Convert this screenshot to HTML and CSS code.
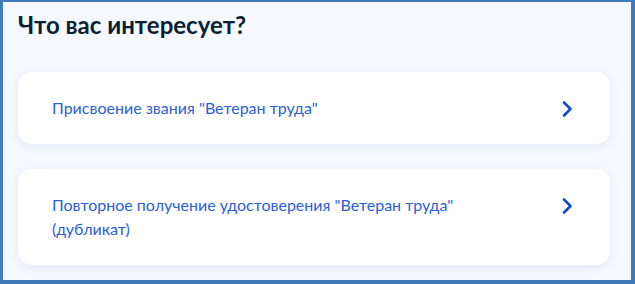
FILE: index.html
```html
<!DOCTYPE html>
<html lang="ru">
  <head>
    <meta charset="UTF-8" />
    <meta name="viewport" content="width=device-width, initial-scale=1.0" />
    <title>Что вас интересует?</title>
    <link rel="stylesheet" href="styles.css">
  </head>
  <body>
    <div class="frame">
      <h2 class="question">Что вас интересует?</h2>

      <div class="options">
        <a href="#" class="option">
          <span class="option-text">Присвоение звания "Ветеран труда"</span>
          <svg class="chevron" width="12" height="18" viewBox="0 0 12 18">
            <path d="M3 2.5 L9.5 9 L3 15.5" fill="none" stroke="#0d4cd3" stroke-width="2.6" stroke-linecap="round" stroke-linejoin="round"/>
          </svg>
        </a>

        <a href="#" class="option">
          <span class="option-text">Повторное получение удостоверения "Ветеран труда" (дубликат)</span>
          <svg class="chevron" width="12" height="18" viewBox="0 0 12 18">
            <path d="M3 2.5 L9.5 9 L3 15.5" fill="none" stroke="#0d4cd3" stroke-width="2.6" stroke-linecap="round" stroke-linejoin="round"/>
          </svg>
        </a>
      </div>
    </div>
  </body>
</html>
```

FILE: styles.css
```css
* {
  margin: 0;
  padding: 0;
  box-sizing: border-box;
  font-family: "Lato", "Noto Sans", sans-serif;
}

body {
  width: 635px;
  height: 284px;
  overflow: hidden;
  background-color: #ffffff;
}

.frame {
  width: 635px;
  height: 284px;
  border-style: solid;
  border-color: #437ab9;
  border-width: 2px 4px 4px 3px;
  background-color: #f5f8fd;
  padding: 8px 21px 0 15px;
}

.question {
  font-size: 24px;
  font-weight: 700;
  color: #0b1f33;
  line-height: 30px;
  margin-bottom: 32px;
}

.options {
  display: flex;
  flex-direction: column;
  gap: 25px;
}

.option {
  display: flex;
  align-items: flex-start;
  justify-content: space-between;
  background-color: #ffffff;
  border-radius: 14px;
  box-shadow: 0 2px 8px rgba(102, 128, 178, 0.12);
  padding: 24px 37px 24px 34px;
  text-decoration: none;
}

.option-text {
  max-width: 450px;
  font-size: 16px;
  line-height: 24px;
  color: #2b5fd6;
}

.chevron {
  margin-top: 4px;
  flex-shrink: 0;
}
```
